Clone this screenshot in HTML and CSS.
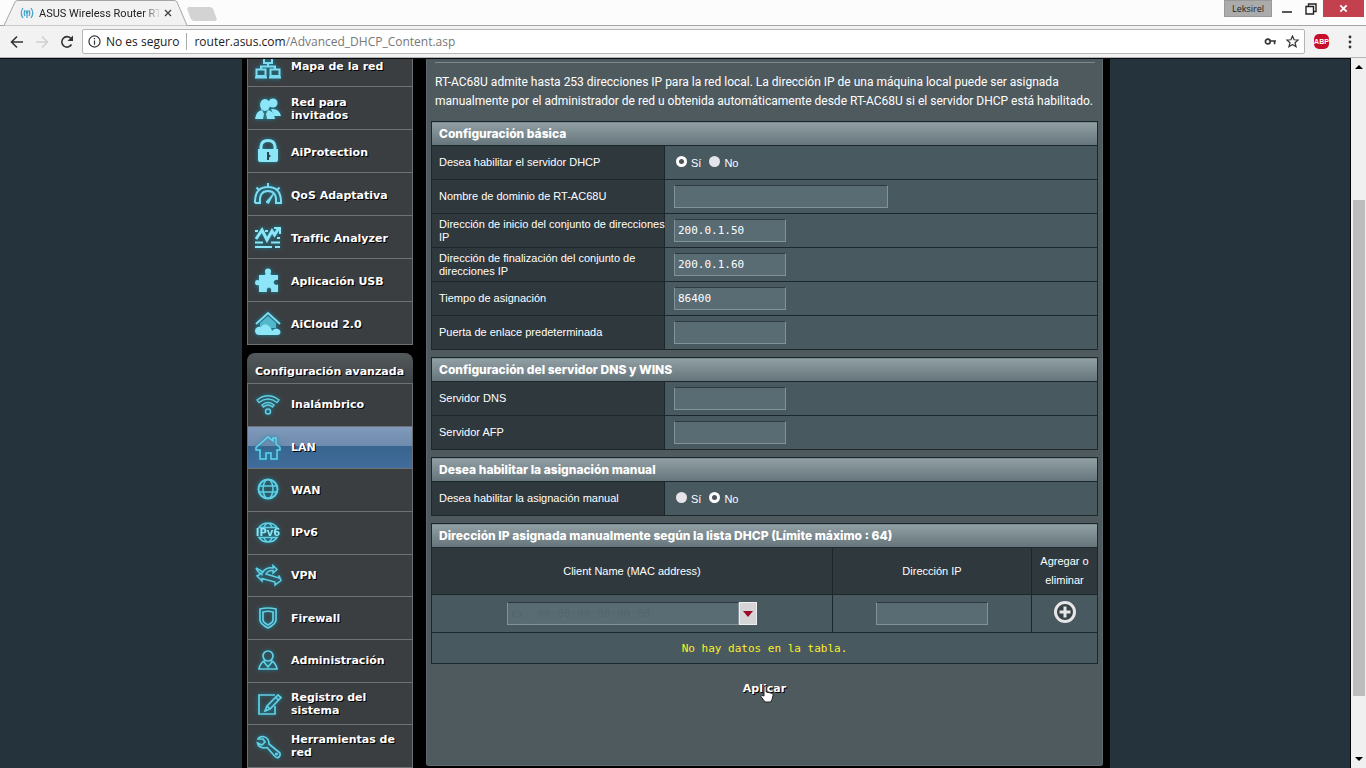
FILE: index.html
```html
<!DOCTYPE html>
<html lang="es">
<head>
  <meta charset="UTF-8">
  <meta name="viewport" content="width=device-width, initial-scale=1.0">
  <title>ASUS Wireless Router RT-AC68U</title>
  <link rel="stylesheet" href="styles.css">
</head>
<body>
  <!-- Browser tabs -->
  <header class="tab-strip">
    <div class="tab">
      <svg class="tab-shape" viewBox="0 0 190 26" preserveAspectRatio="none"><path d="M0 25.500H4L15 2Q16 .5 18 .5H174Q176 .5 177 2L187 25.500H190" fill="#f2f2f2" stroke="#a5a5a5"/></svg>
      <svg class="tab-icon" viewBox="0 0 14 12" fill="none" stroke="#4aa5cf" stroke-width="1.300"><path d="M3 1Q-.5 6 3 11M5 3Q3.500 6 5 9M11 1Q14.500 6 11 11M9 3Q10.500 6 9 9M7 5V11"/><circle cx="7" cy="5" r="1"/></svg>
      <span class="tab-title">ASUS Wireless Router RT</span>
      <button class="tab-close" aria-label="Cerrar pestaña"><svg viewBox="0 0 8 8" width="8" height="8"><path d="M1 1L7 7M7 1L1 7" stroke="#444" stroke-width="1.400"/></svg></button>
    </div>
    <button class="new-tab" aria-label="Nueva pestaña"></button>
    <div class="window-buttons">
      <button class="user-button">Leksirel</button>
      <button class="win-button" aria-label="Minimizar"><svg viewBox="0 0 12 12" width="12" height="12"><path d="M1 9H11" stroke="#222" stroke-width="1.500"/></svg></button>
      <button class="win-button" aria-label="Restaurar"><svg viewBox="0 0 12 12" width="12" height="12" fill="none" stroke="#222"><path d="M1 3.500H8.500V11H1ZM3.500 3V1H11V8.500H9" stroke-width="1.400"/></svg></button>
      <button class="win-button win-close" aria-label="Cerrar"><svg viewBox="0 0 10 10" width="9" height="9"><path d="M1.500 1.500L8.500 8.500M8.500 1.500L1.500 8.500" stroke="#fff" stroke-width="2"/></svg></button>
    </div>
  </header>

  <!-- Address bar -->
  <div class="toolbar">
    <button class="tool" aria-label="Atrás"><svg viewBox="0 0 14 14" width="14" height="14" fill="none" stroke="#333" stroke-width="1.600"><path d="M13 7H2M7 1.500L1.500 7L7 12.500"/></svg></button>
    <button class="tool" aria-label="Adelante"><svg viewBox="0 0 14 14" width="14" height="14" fill="none" stroke="#d0d0d0" stroke-width="1.500"><path d="M1 7H12M7 1.500L12.500 7L7 12.500"/></svg></button>
    <button class="tool" aria-label="Recargar"><svg viewBox="0 0 14 14" width="14" height="14"><path d="M11.500 9.500A5.200 5.200 0 1 1 10.800 3.300" fill="none" stroke="#333" stroke-width="1.600"/><path d="M13 .5V6H7.500Z" fill="#333"/></svg></button>
    <div class="address">
      <svg viewBox="0 0 14 14" width="13" height="13" fill="none" stroke="#333" stroke-width="1.300"><circle cx="7" cy="7" r="6"/><path d="M7 6V10.500M7 3.300V4.700"/></svg>
      <span class="secure">No es seguro</span>
      <span class="url">router.asus.com<span class="url-path">/Advanced_DHCP_Content.asp</span></span>
      <svg class="key" viewBox="0 0 14 10" width="13" height="9" fill="none" stroke="#333" stroke-width="1.800"><circle cx="4" cy="5" r="2.700"/><path d="M7 4.500H13M11.500 4.500V8"/></svg>
      <svg viewBox="0 0 14 14" width="13" height="13"><path d="M7 1L8.700 5.100L13.100 5.400L9.700 8.300L10.800 12.600L7 10.200L3.200 12.600L4.300 8.300L.9 5.400L5.300 5.100Z" fill="none" stroke="#333" stroke-width="1.300"/></svg>
    </div>
    <button class="abp">ABP</button>
    <button class="tool menu" aria-label="Menú"><svg viewBox="0 0 4 14" width="4" height="14" fill="#333"><circle cx="2" cy="2" r="1.400"/><circle cx="2" cy="7" r="1.400"/><circle cx="2" cy="12" r="1.400"/></svg></button>
  </div>

  <div class="viewport">
    <div class="page">
      <div class="frame">
        <!-- Left menu -->
        <aside class="sidebar">
          <nav class="menu-general">
            <a class="item" href="#">
              <svg class="icon" viewBox="0 0 28 28" fill="none" stroke="#7edcf2" stroke-width="2"><path d="M10 4H18V11H10ZM2.500 17.500H11.500V24H2.500ZM16.500 17.500H25.500V24H16.500ZM14 11V14.500M7 17V14.500H21V17M1 25.500H13M15 25.500H27"/></svg>
              <span>Mapa de la red</span></a>
            <a class="item" href="#">
              <svg class="icon" viewBox="0 0 28 28" fill="#8ce6f7"><circle cx="19" cy="8" r="4.500"/><path d="M17 14Q25 13 27 21H20Z"/><ellipse cx="11" cy="10" rx="5" ry="6"/><path d="M1 24Q2 16 8 15L11 20L14 15Q20 16 21 24Z"/><path d="M9 16H13L12 19L13 24H9L10 19Z" fill="#3a6f7b"/></svg>
              <span>Red para invitados</span></a>
            <a class="item" href="#">
              <svg class="icon" viewBox="0 0 28 28"><path d="M7 12V8.500Q7.500 2.500 14 2.500Q20.500 2.500 21 8.500V12" fill="none" stroke="#8ce6f7" stroke-width="3"/><path d="M4 11H24V22Q24 24 22 24H6Q4 24 4 22Z" fill="#8ce6f7"/><path d="M13 14H15V16.500L17 18L15 19.500V22H13Z" fill="#28444e"/></svg>
              <span>AiProtection</span></a>
            <a class="item" href="#">
              <svg class="icon" viewBox="0 0 28 28" fill="none" stroke="#7edcf2" stroke-width="2"><path d="M1 22V20Q1.500 6 14 6Q26.500 6 27 20V22H22Q23 10 14 10Q5 10 6 22H1M14 6V2M5 9L2.500 6.500M23 9L25.500 6.500"/><path d="M12 21L20 12L14.500 22.500Z" fill="#7edcf2" stroke-width="1"/></svg>
              <span>QoS Adaptativa</span></a>
            <a class="item" href="#">
              <svg class="icon" viewBox="0 0 28 28" fill="none" stroke="#8ce6f7"><path d="M2 15L8 6L13 16L18 7L20.500 11L25 4" stroke-width="3"/><path d="M20 4H26V10" stroke-width="2"/><path d="M1 18.500H9M17 18.500H26M1 23H18M21 23H26M1 7H4M11 7H14M23 14H26" stroke-width="2"/></svg>
              <span>Traffic Analyzer</span></a>
            <a class="item" href="#">
              <svg class="icon" viewBox="0 0 28 28" fill="#8ce6f7"><path d="M5 8H11Q12 7 11 5Q10.500 1.500 14 1.500Q17.500 1.500 17 5Q16 7 17 8H24V13Q22 12.500 20.500 13.500Q18.500 16 21 17.500Q23 18.500 24 17V25H17Q18 21 15 20.500Q12 21 13 25H5V18Q1 19 1 15.500Q1.500 12 5 13.500Z"/></svg>
              <span>Aplicación USB</span></a>
            <a class="item" href="#">
              <svg class="icon" viewBox="0 0 28 28"><path d="M2 14L14 3L26 14" fill="none" stroke="#7edcf2" stroke-width="2"/><path d="M6 13L14 6L22 13V18H6Z" fill="#52b7cb"/><path d="M6 25Q1 25 1 20.500Q2 16 7 17Q10 12 15 16Q18 19 18 21Q19 19 22 18.500Q26.500 19 26.500 22.500Q26 25 23 25Z" fill="#8ce6f7"/></svg>
              <span>AiCloud 2.0</span></a>
          </nav>
          <nav class="menu-advanced">
            <h2 class="menu-title">Configuración avanzada</h2>
            <a class="item" href="#">
              <svg class="icon" viewBox="0 0 28 28" fill="none" stroke="#62cfe5" stroke-width="1.500"><path d="M3 9Q14 .5 25 9L23 11.500Q14 4.500 5 11.500ZM8 14Q14 9 20 14L18.500 16Q14 12 9.500 16Z"/><circle cx="14" cy="20.500" r="2.500"/></svg>
              <span>Inalámbrico</span></a>
            <a class="item active" href="#">
              <svg class="icon" viewBox="0 0 28 28" fill="none" stroke="#62d5f2" stroke-width="1.500"><path d="M2 13.500L14 3L19 7V4H22V10L26 13.500V16H23V25H17V19H12V25H6V16H2Z"/></svg>
              <span>LAN</span></a>
            <a class="item" href="#">
              <svg class="icon" viewBox="0 0 28 28" fill="none" stroke="#62cfe5" stroke-width="1.500"><circle cx="14" cy="13" r="9.500" stroke-width="2"/><ellipse cx="14" cy="13" rx="5" ry="9.500"/><path d="M5 10H23M5 16H23"/></svg>
              <span>WAN</span></a>
            <a class="item" href="#">
              <svg class="icon" viewBox="0 0 28 28" fill="none" stroke="#62cfe5" stroke-width="1.500"><path d="M5 8.500Q8 4 14 4Q20 4 23 8.500ZM5 18.500Q8 23 14 23Q20 23 23 18.500ZM10 8Q11 5 14 4Q17 5 18 8M10 19Q11 22 14 23Q17 22 18 19"/><text x="14" y="17" text-anchor="middle" class="icon-text">IPv6</text></svg>
              <span>IPv6</span></a>
            <a class="item" href="#">
              <svg class="icon" viewBox="0 0 28 28" fill="none" stroke="#62cfe5" stroke-width="1.500"><path d="M2 6L9 10Q12 5 19 6V3.500L23 7.500L19 11V8.500Q14 8 12 12L25 16V13.500L27 18.500L21 23V20L8 16.500V19L3 14L8 11V13.500M2 6Q4 11 8 12"/></svg>
              <span>VPN</span></a>
            <a class="item" href="#">
              <svg class="icon" viewBox="0 0 28 28" fill="none" stroke="#62cfe5" stroke-width="1.700"><path d="M6 5Q14 3 22 5V16Q22 20 14 24Q6 20 6 16ZM9 8Q14 6.500 19 8V16Q19 18.500 14 21Q9 18.500 9 16Z"/></svg>
              <span>Firewall</span></a>
            <a class="item" href="#">
              <svg class="icon" viewBox="0 0 28 28" fill="none" stroke="#62cfe5" stroke-width="1.700"><circle cx="14" cy="9" r="5"/><path d="M11 13.500Q6 16 5 22H23Q22 16 17 13.500M10 15L14 20L18 15"/></svg>
              <span>Administración</span></a>
            <a class="item" href="#">
              <svg class="icon" viewBox="0 0 28 28" fill="none" stroke="#62cfe5" stroke-width="1.700"><path d="M21 5H5V24H21V16M24 5L27 7.500L16 19L11 21L13 16Z"/><path d="M13 16L16 19M21.500 7L24.500 10"/></svg>
              <span>Registro del sistema</span></a>
            <a class="item" href="#">
              <svg class="icon" viewBox="0 0 28 28" fill="none" stroke="#62cfe5" stroke-width="1.700"><path d="M4 7Q5 4.500 9 4.500Q15 5.500 15 12L25.500 20.500Q27 23 25 25Q23 26.500 21 24.500L13 15.500Q5 17 3.500 11L8 13L11 10L9 7Z"/><circle cx="22.500" cy="22" r=".7"/></svg>
              <span>Herramientas de red</span></a>
          </nav>
        </aside>

        <!-- DHCP settings -->
        <main class="content">
          <form>
            <p class="intro">RT-AC68U admite hasta 253 direcciones IP para la red local. La dirección IP de una máquina local puede ser asignada manualmente por el administrador de red u obtenida automáticamente desde RT-AC68U si el servidor DHCP está habilitado.</p>

            <table class="settings">
              <colgroup><col class="col-name"><col></colgroup>
              <thead><tr><th colspan="2" class="section">Configuración básica</th></tr></thead>
              <tbody>
                <tr>
                  <th class="name">Desea habilitar el servidor DHCP</th>
                  <td><div class="choices">
                    <label><input type="radio" name="dhcp" class="radio" checked>Sí</label>
                    <label><input type="radio" name="dhcp" class="radio">No</label>
                  </div></td>
                </tr>
                <tr>
                  <th class="name"><label for="domain">Nombre de dominio de RT-AC68U</label></th>
                  <td><input type="text" id="domain" class="field field-wide"></td>
                </tr>
                <tr>
                  <th class="name"><label for="poolStart">Dirección de inicio del conjunto de direcciones<br>IP</label></th>
                  <td><input type="text" id="poolStart" class="field" value="200.0.1.50"></td>
                </tr>
                <tr>
                  <th class="name"><label for="poolEnd">Dirección de finalización del conjunto de<br>direcciones IP</label></th>
                  <td><input type="text" id="poolEnd" class="field" value="200.0.1.60"></td>
                </tr>
                <tr>
                  <th class="name"><label for="lease">Tiempo de asignación</label></th>
                  <td><input type="text" id="lease" class="field" value="86400"></td>
                </tr>
                <tr>
                  <th class="name"><label for="gateway">Puerta de enlace predeterminada</label></th>
                  <td><input type="text" id="gateway" class="field"></td>
                </tr>
              </tbody>
            </table>

            <table class="settings">
              <colgroup><col class="col-name"><col></colgroup>
              <thead><tr><th colspan="2" class="section">Configuración del servidor DNS y WINS</th></tr></thead>
              <tbody>
                <tr>
                  <th class="name"><label for="dns">Servidor DNS</label></th>
                  <td><input type="text" id="dns" class="field"></td>
                </tr>
                <tr>
                  <th class="name"><label for="wins">Servidor AFP</label></th>
                  <td><input type="text" id="wins" class="field"></td>
                </tr>
              </tbody>
            </table>

            <table class="settings">
              <colgroup><col class="col-name"><col></colgroup>
              <thead><tr><th colspan="2" class="section">Desea habilitar la asignación manual</th></tr></thead>
              <tbody>
                <tr>
                  <th class="name">Desea habilitar la asignación manual</th>
                  <td><div class="choices">
                    <label><input type="radio" name="manual" class="radio">Sí</label>
                    <label><input type="radio" name="manual" class="radio" checked>No</label>
                  </div></td>
                </tr>
              </tbody>
            </table>

            <table class="settings clients">
              <colgroup><col class="col-client"><col class="col-ip"><col class="col-add"></colgroup>
              <thead>
                <tr><th colspan="3" class="section">Dirección IP asignada manualmente según la lista DHCP (Límite máximo : 64)</th></tr>
                <tr class="heads"><th>Client Name (MAC address)</th><th>Dirección IP</th><th>Agregar o eliminar</th></tr>
              </thead>
              <tbody>
                <tr class="entry">
                  <td><div class="combo">
                    <input type="text" class="field" placeholder="ex: 00:00:00:00:00:00" aria-label="Client Name (MAC address)">
                    <button type="button" class="combo-arrow" aria-label="Mostrar clientes"><svg viewBox="0 0 10 6" width="10" height="6"><path d="M0 0H10L5 6Z" fill="#9b0d25"/></svg></button>
                  </div></td>
                  <td><input type="text" class="field" aria-label="Dirección IP"></td>
                  <td><button type="button" class="add" aria-label="Agregar">
                    <svg viewBox="0 0 24 24" width="24" height="24"><circle cx="12" cy="12" r="9.500" fill="#394246" stroke="#e6e6e6" stroke-width="3"/><path d="M12 6.500V17.500M6.500 12H17.500" stroke="#e6e6e6" stroke-width="3"/></svg>
                  </button></td>
                </tr>
                <tr class="empty"><td colspan="3">No hay datos en la tabla.</td></tr>
              </tbody>
            </table>

            <div class="actions">
              <button type="button" class="apply">Aplicar</button>
              <svg class="pointer" viewBox="0 0 14 18" width="14" height="18"><path d="M4 1.500Q5.500 .5 6.200 2V7L12 8.300Q13.200 9 13 10.500L12 14.500L10.500 17H5L1 11.500Q1 9.500 4 11Z" fill="#fff" stroke="#222"/></svg>
            </div>
          </form>
        </main>
      </div>
    </div>

    <div class="scrollbar">
      <svg viewBox="0 0 8 4" width="8" height="4"><path d="M0 4L4 0L8 4Z"/></svg>
      <div class="track"><div class="thumb"></div></div>
      <svg viewBox="0 0 8 4" width="8" height="4"><path d="M0 0L4 4L8 0Z"/></svg>
    </div>
  </div>
</body>
</html>
```
FILE: styles.css
```css
* {
  box-sizing: border-box;
}

body {
  display: flex;
  flex-direction: column;
  height: 100vh;
  margin: 0;
  overflow: hidden;
  background-color: #f2f2f2;
  font-family: "Liberation Sans", Arial, sans-serif;
  font-size: 11px;
  color: #fff;
}

button {
  padding: 0;
  border: none;
  background: none;
  cursor: pointer;
}

/* Tabs */
.tab-strip {
  display: flex;
  flex: none;
  height: 26px;
  background-color: #fcfcfc;
  border-bottom: 1px solid #a5a5a5;
  color: #222;
}

.tab {
  position: relative;
  display: flex;
  align-items: center;
  width: 190px;
  height: 26px;
  padding-left: 20px;
}

.tab-shape {
  position: absolute;
  top: 0;
  left: 0;
  width: 100%;
  height: 100%;
}

.tab-icon {
  position: relative;
  width: 14px;
  height: 12px;
}

.tab-title {
  position: relative;
  width: 122px;
  margin-left: 5px;
  white-space: nowrap;
  font-family: Roboto, sans-serif;
  -webkit-mask-image: linear-gradient(to right, #000 85%, transparent);
  mask-image: linear-gradient(to right, #000 85%, transparent);
}

.tab-close {
  position: relative;
  display: flex;
  margin-left: 3px;
}

.new-tab {
  width: 26px;
  height: 14px;
  margin: 7px 0 0 -1px;
  background-color: #d3d3d3;
  border-radius: 3px;
  transform: skewX(20deg);
}

.window-buttons {
  display: flex;
  margin-left: auto;
}

.user-button {
  width: 48px;
  height: 17px;
  margin-right: 3px;
  background-color: #ababab;
  border: 1px solid #999;
  font-family: "Open Sans", sans-serif;
  font-size: 9px;
  line-height: 14px;
  color: #222;
}

.win-button {
  display: flex;
  align-items: center;
  justify-content: center;
  width: 24px;
  height: 17px;
}

.win-close {
  width: 41px;
  margin-right: 2px;
  background-color: #c3404f;
}

/* Address bar */
.toolbar {
  display: flex;
  flex: none;
  align-items: center;
  height: 32px;
  padding-left: 4px;
  border-bottom: 1px solid #b4b4b4;
  font-family: "Open Sans", sans-serif;
  font-size: 12px;
  color: #222;
}

.tool {
  display: flex;
  align-items: center;
  justify-content: center;
  width: 25px;
  height: 25px;
}

.address {
  display: flex;
  flex: 1;
  align-items: center;
  height: 25px;
  margin-left: 3px;
  padding: 0 5px;
  background-color: #fff;
  border: 1px solid #b5b5b5;
  border-radius: 2px;
}

.secure {
  margin-left: 5px;
  padding-right: 7px;
  border-right: 1px solid #aaa;
}

.url {
  flex: 1;
  margin-left: 7px;
}

.url-path {
  color: #777;
}

.key {
  margin-right: 9px;
}

.abp {
  width: 15px;
  height: 15px;
  margin-left: 9px;
  background-color: #c70d2c;
  border-radius: 5px;
  font-size: 7px;
  font-weight: bold;
  color: #fff;
}

.menu {
  margin: 0 4px 0 8px;
}

/* Page area */
.viewport {
  display: flex;
  flex: 1;
  min-height: 0;
}

.page {
  flex: 1;
  padding-left: 2px;
  overflow: hidden;
  background-color: #25343c;
  border: solid #05090c;
  border-width: 1px 1px 0 0;
}

.frame {
  display: flex;
  gap: 13px;
  width: 868px;
  height: 100%;
  margin: 0 auto;
  padding: 0 7px 0 5px;
  background-color: #000;
}

/* Left menu */
.sidebar {
  display: flex;
  flex: none;
  flex-direction: column;
  gap: 8px;
  width: 166px;
  margin-top: -15px;
  font-family: "DejaVu Sans", Verdana, sans-serif;
  font-size: 11px;
  font-weight: bold;
}

.menu-general {
  flex: none;
}

.menu-advanced {
  display: flex;
  flex: 1;
  flex-direction: column;
}

.menu-title {
  height: 31px;
  margin: 0;
  padding: 3px 0 0 8px;
  background: linear-gradient(#54595c, #3d4245);
  border-bottom: 1px solid #6d7173;
  border-radius: 8px 8px 0 0;
  font-size: 11px;
  line-height: 31px;
  white-space: nowrap;
  text-shadow: 1px 1px 0 #000;
}

.item {
  display: flex;
  align-items: center;
  gap: 9px;
  height: 43px;
  padding: 2px 8px 0 6px;
  background-color: #3a3e41;
  border: solid #6d7173;
  border-width: 0 1px 1px;
  line-height: 13px;
  color: #fff;
  text-decoration: none;
  text-shadow: 1px 1px 0 #000;
}

.menu-advanced .item {
  flex: 1;
  height: auto;
  padding-top: 0;
}

.item.active {
  background: linear-gradient(#7f9abb, #6f8bad 46%, #38658f 47%, #426c9b);
}

.icon {
  flex: none;
  width: 28px;
  height: 28px;
  filter: drop-shadow(0 0 2px #168aa3);
}

.icon-text {
  fill: #8ce6f7;
  stroke: none;
  font-size: 10px;
  text-shadow: none;
}

/* Main panel */
.content {
  flex: 1;
  height: calc(100% - 2px);
  padding: 3px 4px 0;
  background-color: #4f5a5f;
  border: 1px solid #5e696d;
  border-top: none;
  border-radius: 0 0 3px 3px;
}

.intro {
  margin: 0 3px 10px 4px;
  padding-top: 10px;
  border-top: 1px solid #7b8a8c;
  font-family: Roboto, Arial, sans-serif;
  font-size: 12px;
  line-height: 19px;
}

.settings {
  width: 100%;
  margin-bottom: 7px;
  border-collapse: collapse;
  table-layout: fixed;
}

.settings th,
.settings td {
  border: 1px solid #1b272b;
}

.settings .section {
  height: 24px;
  padding: 0 7px;
  background: linear-gradient(#91a0a4, #65747a);
  font-family: "Inter", "Arial Black", sans-serif;
  font-size: 12px;
  font-weight: 800;
  text-align: left;
}

.settings .col-name {
  width: 233px;
}

.settings td {
  height: 34px;
  padding: 0 9px;
  background-color: #48595f;
}

.settings .name {
  padding: 0 0 0 7px;
  background-color: #2f383d;
  font-weight: normal;
  line-height: 13px;
  text-align: left;
  white-space: nowrap;
}

.field {
  width: 112px;
  height: 23px;
  padding: 0 3px;
  background-color: #596c74;
  border: 1px solid #82949a;
  border-top-color: #2d3a3f;
  outline: none;
  font-family: "DejaVu Sans Mono", monospace;
  font-size: 11px;
  color: #fff;
  vertical-align: middle;
}

.field-wide {
  width: 214px;
}

.field::placeholder {
  color: #53656c;
}

.choices {
  display: flex;
  gap: 6px;
}

.choices label {
  display: flex;
  align-items: center;
  gap: 4px;
  padding-left: 2px;
}

.radio {
  appearance: none;
  width: 11px;
  height: 11px;
  margin: 0 0 2px;
  background-color: #e4e4ea;
  border-radius: 50%;
}

.radio:checked {
  background-color: #4c5458;
  border: 3px solid #fff;
}

.clients .col-client {
  width: 401px;
}

.clients .col-add {
  width: 66px;
}

.clients .heads th {
  height: 47px;
  padding: 0 2px;
  background-color: #2f383d;
  font-weight: normal;
  line-height: 19px;
}

.clients td {
  text-align: center;
}

.clients .entry td {
  height: 38px;
}

.clients .empty td {
  height: 31px;
  font-family: "DejaVu Sans Mono", monospace;
  font-size: 11px;
  color: #ffef2b;
}

.combo {
  display: flex;
  justify-content: center;
}

.combo .field {
  width: 232px;
}

.combo-arrow {
  display: flex;
  align-items: center;
  justify-content: center;
  width: 18px;
  height: 23px;
  background-color: #d5d5d8;
  border: 1px solid #efefef;
}

.add {
  vertical-align: middle;
}

.actions {
  position: relative;
  display: flex;
  justify-content: center;
}

.apply {
  width: 110px;
  height: 34px;
  font-family: "DejaVu Sans", Verdana, sans-serif;
  font-size: 11px;
  font-weight: bold;
  color: #fff;
  text-shadow: 1px 1px 0 #000;
}

/* Hand cursor over the button */
.pointer {
  position: absolute;
  top: 14px;
  left: calc(50% - 5px);
}

/* Page scrollbar */
.scrollbar {
  display: flex;
  flex: none;
  flex-direction: column;
  align-items: center;
  width: 15px;
  padding: 7px 0;
  background-color: #f0f0f0;
}

.track {
  flex: 1;
  width: 12px;
  margin: 4px 0;
}

.thumb {
  height: 73%;
  margin-top: 127px;
  background-color: #bcbcbc;
}
```
